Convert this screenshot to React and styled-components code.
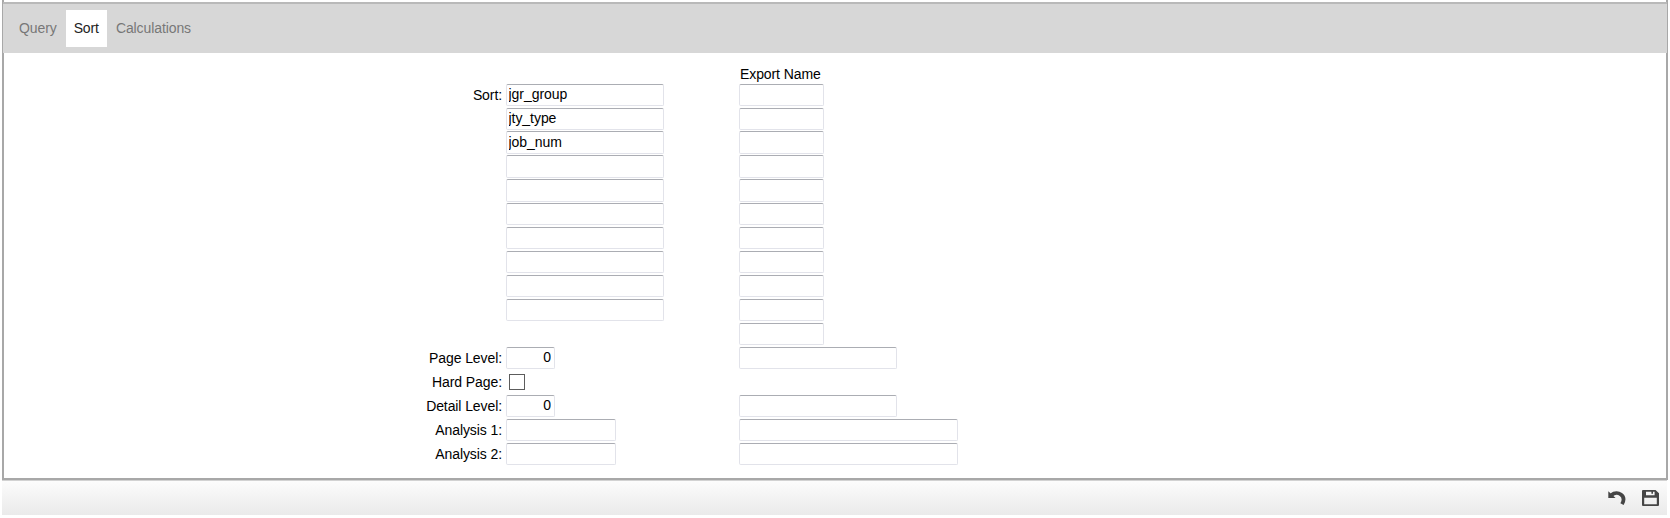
import React from "react";
import styled, { createGlobalStyle } from "styled-components";

const Global = createGlobalStyle`
  * { box-sizing: border-box; }
  body {
    margin: 0;
    background: #fff;
    color: #000;
    font: 14px/20px "Liberation Sans", Arial, sans-serif;
  }
`;

const Page = styled.div`
  width: 1670px;
  height: 518px;
  padding: 0 2px;
`;

const Panel = styled.main`
  display: flex;
  flex-direction: column;
  height: 480px;
  border: solid #a8a8a8;
  border-width: 0 2px 2px;
  padding-top: 2px;
`;

const TabBar = styled.nav`
  display: flex;
  align-items: flex-start;
  height: 51px;
  margin: 0 -1px;
  padding: 6px 0 0 8px;
  background: #d7d7d7;
  border-top: 2px solid #b9b9b9;
`;

const Tab = styled.button`
  height: 37px;
  border: 0;
  margin-right: ${(p) => (p.$active ? 1 : 0)}px;
  padding: 0 ${(p) => (p.$active ? 8 : 9)}px 2px 8px;
  font: inherit;
  letter-spacing: -0.1px;
  background: ${(p) => (p.$active ? "#fff" : "transparent")};
  color: ${(p) => (p.$active ? "#222" : "#777")};
`;

const Form = styled.div`
  display: flex;
  flex-direction: column;
  padding-top: 11px;
`;

const Row = styled.div`
  display: grid;
  grid-template-columns: 498px 4px 233px 1fr;
  align-items: start;
  height: ${(p) => p.$height || 24}px;
`;

const Label = styled.label`
  grid-column: 1;
  padding-top: 1px;
  text-align: right;
  letter-spacing: -0.09px;
`;

const Heading = styled.div`
  grid-column: 4;
  padding: 0 0 0 1px;
  letter-spacing: -0.09px;
`;

const Field = styled.input`
  grid-column: ${(p) => p.$column};
  width: ${(p) => p.$width}px;
  height: ${(p) => p.$height || 22}px;
  border: 1px solid #e2e3ea;
  border-top-color: #abadb3;
  border-radius: 2px;
  padding: 0 3px 2px ${(p) => (p.$align ? 2 : 1.5)}px;
  background: #fff;
  color: #000;
  font: inherit;
  letter-spacing: -0.05px;
  text-align: ${(p) => p.$align || "left"};
  outline: 0;
`;

const Check = styled.input`
  grid-column: 3;
  appearance: none;
  width: 16px;
  height: 16px;
  margin: 3px 0 0 3px;
  border: 1px solid #5c5c5c;
  background: #fff;
`;

const Footer = styled.footer`
  display: flex;
  justify-content: flex-end;
  align-items: flex-start;
  gap: 16px;
  width: 1665px;
  height: 35px;
  padding: 8px 8px 0 0;
  border-top: 1px solid #d2d2d2;
  background: linear-gradient(#fcfcfc, #eaeaea);
`;

const Action = styled.button`
  display: flex;
  border: 0;
  padding: 0;
  background: none;
  color: #454545;
`;

const sorts = ["jgr_group", "jty_type", "job_num", "", "", "", "", "", "", ""];

const options = [
  { label: "Page Level:", value: "0", width: 49, exportWidth: 158, align: "right" },
  { label: "Hard Page:", check: true },
  { label: "Detail Level:", value: "0", width: 49, exportWidth: 158, align: "right" },
  { label: "Analysis 1:", value: "", width: 110, exportWidth: 219 },
  { label: "Analysis 2:", value: "", width: 110, exportWidth: 219 },
];

export default function App() {
  return (
    <>
      <Global />
      <Page>
        <Panel>
          <TabBar>
            <Tab>Query</Tab>
            <Tab $active>Sort</Tab>
            <Tab>Calculations</Tab>
          </TabBar>
          <Form>
            <Row $height={20}>
              <Heading>Export Name</Heading>
            </Row>
            {sorts.map((value, i) => {
              const height = i >= 2 && i <= 4 ? 23 : 22;
              return (
                <Row key={i} $height={i === 1 ? 23 : 24}>
                  {i === 0 && <Label>Sort:</Label>}
                  <Field $column={3} $width={158} $height={height} defaultValue={value} />
                  <Field $column={4} $width={85} $height={height} />
                </Row>
              );
            })}
            <Row>
              <Field $column={4} $width={85} />
            </Row>
            {options.map((o) => (
              <Row key={o.label}>
                <Label>{o.label}</Label>
                {o.check ? (
                  <Check type="checkbox" />
                ) : (
                  <>
                    <Field $column={3} $width={o.width} $align={o.align} defaultValue={o.value} />
                    <Field $column={4} $width={o.exportWidth} />
                  </>
                )}
              </Row>
            ))}
          </Form>
        </Panel>
        <Footer>
          <Action aria-label="Undo">
            <svg width="18" height="18" viewBox="0 0 18 18">
              <path d="M0.3 2.2V9H7.6Z" fill="currentColor" />
              <path
                d="M3.5 6C9.5 1.2 19 6.5 14 15.2"
                fill="none"
                stroke="currentColor"
                strokeWidth="3.7"
              />
            </svg>
          </Action>
          <Action aria-label="Save">
            <svg width="17" height="18" viewBox="0 0 17 18">
              <path
                d="M1 1h12.5L17 4.3V16a1 1 0 0 1-1 1H1a1 1 0 0 1-1-1V2a1 1 0 0 1 1-1Zm3 1.7v3.6h8.6V2.7h-1.6v2H9.4v-2ZM2.2 8.7v6.5h12.6V8.7Z"
                fill="currentColor"
                fillRule="evenodd"
              />
            </svg>
          </Action>
        </Footer>
      </Page>
    </>
  );
}
